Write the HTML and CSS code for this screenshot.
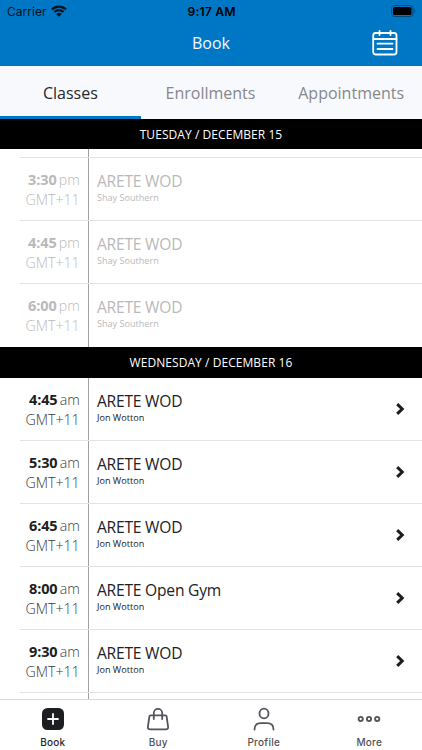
FILE: index.html
```html
<!DOCTYPE html>
<html lang="en">
<head>
<meta charset="utf-8">
<title>Book</title>
<link rel="stylesheet" href="styles.css">
</head>
<body>
<div class="app">
  <header class="top">
    <div class="status">
      <div class="carrier"><span>Carrier</span>
        <svg class="wifi" width="16" height="12" viewBox="0 0 16 12" fill="none" stroke="#07131d" stroke-width="2.2"><path d="M1 4.4a10 10 0 0 1 14 0M3.5 7a6.4 6.4 0 0 1 9 0"/><path d="M5.3 9a3.8 3.8 0 0 1 5.4 0L8 11.7z" fill="#07131d" stroke="none"/></svg>
      </div>
      <div class="clock">9:17 AM</div>
      <svg class="battery" width="25" height="12" viewBox="0 0 25 12"><rect x=".5" y=".5" width="21.5" height="11" rx="3" fill="none" stroke="#034a7c"/><rect x="2" y="2" width="18.5" height="8" rx="1.6" fill="#000"/><path d="M23.3 4v4c1.5-.6 1.5-3.400 0-4z" fill="#034a7c"/></svg>
    </div>
    <div class="titlebar">
      <h1>Book</h1>
      <svg class="calendar" width="26" height="26" viewBox="0 0 26 26" fill="none" stroke="#fff" stroke-width="1.8" stroke-linecap="round"><rect x="1.200" y="3" width="23.300" height="21.500" rx="2.500"/><path d="M1.500 9h23M7.500 1v4M18.500 1v4M5.500 13.700h15M5.500 19h15"/></svg>
    </div>
  </header>
  <nav class="tabs"><div class="tab active"><span>Classes</span></div><div class="tab"><span>Enrollments</span></div><div class="tab"><span>Appointments</span></div></nav>
  <h2 class="day first">TUESDAY / DECEMBER 15</h2>
  <section class="list past">
    <div class="row sliver-top"></div>
    <div class="row"><div class="time"><p><b>3:30</b> pm</p><p>GMT+11</p></div><div class="info"><h3>ARETE WOD</h3><p>Shay Southern</p></div></div>
    <div class="row"><div class="time"><p><b>4:45</b> pm</p><p>GMT+11</p></div><div class="info"><h3>ARETE WOD</h3><p>Shay Southern</p></div></div>
    <div class="row"><div class="time"><p><b>6:00</b> pm</p><p>GMT+11</p></div><div class="info"><h3>ARETE WOD</h3><p>Shay Southern</p></div></div>
  </section>
  <h2 class="day">WEDNESDAY / DECEMBER 16</h2>
  <section class="list upcoming">
    <div class="row"><div class="time"><p><b>4:45</b> am</p><p>GMT+11</p></div><div class="info"><h3>ARETE WOD</h3><p>Jon Wotton</p></div><svg class="chev" width="10" height="14" viewBox="0 0 10 14"><path d="M2.200 2.200 7.200 7 2.200 11.800"/></svg></div>
    <div class="row"><div class="time"><p><b>5:30</b> am</p><p>GMT+11</p></div><div class="info"><h3>ARETE WOD</h3><p>Jon Wotton</p></div><svg class="chev" width="10" height="14" viewBox="0 0 10 14"><path d="M2.200 2.200 7.200 7 2.200 11.800"/></svg></div>
    <div class="row"><div class="time"><p><b>6:45</b> am</p><p>GMT+11</p></div><div class="info"><h3>ARETE WOD</h3><p>Jon Wotton</p></div><svg class="chev" width="10" height="14" viewBox="0 0 10 14"><path d="M2.200 2.200 7.200 7 2.200 11.800"/></svg></div>
    <div class="row"><div class="time"><p><b>8:00</b> am</p><p>GMT+11</p></div><div class="info"><h3>ARETE Open Gym</h3><p>Jon Wotton</p></div><svg class="chev" width="10" height="14" viewBox="0 0 10 14"><path d="M2.200 2.200 7.200 7 2.200 11.800"/></svg></div>
    <div class="row"><div class="time"><p><b>9:30</b> am</p><p>GMT+11</p></div><div class="info"><h3>ARETE WOD</h3><p>Jon Wotton</p></div><svg class="chev" width="10" height="14" viewBox="0 0 10 14"><path d="M2.200 2.200 7.200 7 2.200 11.800"/></svg></div>
  </section>
  <nav class="bottom">
    <div class="item on"><svg width="24" height="24" viewBox="0 0 24 24"><rect x="1" y="1" width="22" height="22" rx="5.500" fill="#1d1e22"/><path d="M12 7v10M7 12h10" stroke="#fff" stroke-width="1.800" stroke-linecap="round"/></svg><span>Book</span></div>
    <div class="item"><svg width="24" height="24" viewBox="0 0 24 24" class="line"><path d="M4.600 8.300h14.800q1 0 1.200 1l1.500 10.500q.3 2.500-2.200 2.500H4.100q-2.500 0-2.200-2.500L3.400 9.300q.2-1 1.200-1z"/><path d="M7.800 12V6a4.200 4.200 0 0 1 8.400 0v6"/></svg><span>Buy</span></div>
    <div class="item"><svg width="24" height="24" viewBox="0 0 24 24" class="line"><ellipse cx="12" cy="6.500" rx="4.500" ry="4.900"/><path d="M2.500 22.500c0-4.200 2.800-6.300 6.500-6.300h6c3.700 0 6.500 2.100 6.500 6.300"/></svg><span>Profile</span></div>
    <div class="item"><svg width="24" height="24" viewBox="0 0 24 24" class="line dots"><circle cx="3.700" cy="12" r="2.100"/><circle cx="12" cy="12" r="2.100"/><circle cx="20.200" cy="12" r="2.100"/></svg><span>More</span></div>
  </nav>
</div>
</body>
</html>
```
FILE: styles.css
```css
* { box-sizing: border-box; margin: 0; padding: 0; }
body { font-family: "Open Sans", sans-serif; background: #fff; overflow: hidden; }
.app { width: 422px; height: 750px; display: flex; flex-direction: column; overflow: hidden; }
svg { display: block; flex: none; }
.top { height: 65.5px; flex: none; background: #0077c5; }
.status { height: 22px; display: grid; grid-template-columns: 1fr auto 1fr; align-items: center; padding: 0 6px 0 7px; font-family: Inter, sans-serif; color: #07131d; }
.carrier { display: flex; align-items: center; gap: 4px; font-size: 12px; letter-spacing: .05px; }
.wifi { margin-top: -1px; }
.clock { font-size: 12.2px; font-weight: 600; letter-spacing: .15px; color: #000; }
.battery { justify-self: end; margin-top: -1px; }
.titlebar { height: 42px; display: grid; grid-template-columns: 1fr auto 1fr; align-items: center; }
.titlebar h1 { grid-column: 2; font-size: 16px; line-height: 22px; font-weight: 400; color: #f2f9ff; }
.calendar { justify-self: end; margin-right: 24px; margin-top: 0; }
.tabs { height: 53px; flex: none; display: grid; grid-template-columns: repeat(3, 1fr); background: #f8f9fc; }
.tab { display: flex; align-items: center; justify-content: center; font-size: 16px; color: #85888d; border-bottom: 3px solid transparent; padding: 4px 1px 0 0; }
.tab.active { color: #25272b; border-bottom-color: #0077c5; padding-right: 0; }
.day { height: 30.5px; flex: none; background: #000; color: #fff; font-size: 12px; letter-spacing: .06px; font-weight: 400; line-height: 31px; text-align: center; }
.list { flex: none; background: linear-gradient(#a0a0a2, #a0a0a2) 88px 0 / 1px 100% no-repeat; }
.past { height: 198px; }
.row { height: 63px; margin-left: 20px; border-bottom: 1px solid #e3e3e4; display: flex; align-items: flex-start; }
.row.sliver-top { height: 9px; }
.time { width: 59.7px; padding-top: 12px; text-align: right; font-weight: 300; font-size: 14.2px; line-height: 19.5px; color: #37383b; flex: none; word-spacing: -1.6px; }
.time b { font-weight: 700; font-size: 14.5px; color: #1d1e21; letter-spacing: -.1px; }
.info { flex: 1; padding: 12px 0 0 17.3px; color: #202124; }
.info h3 { font-size: 15.6px; letter-spacing: -.22px; font-weight: 400; line-height: 22px; }
.info p { font-size: 9.1px; line-height: 12px; }
.past .time, .past .time b, .past .info { color: #b9b9ba; }
.past .row:last-child { border-bottom: 0; }
.upcoming { height: 321.5px; padding-top: .5px; }
.chev { margin-top: 23.5px; margin-right: 17px; fill: none; stroke: #1b1c1f; stroke-width: 3; }
.bottom { height: 51px; flex: none; display: grid; grid-template-columns: repeat(4, 1fr); border-top: 1px solid #dadadc; background: #fff; }
.item { display: flex; flex-direction: column; align-items: center; padding-top: 7px; font-family: Inter, sans-serif; font-size: 10px; line-height: 12px; font-weight: 500; letter-spacing: .25px; color: #505158; gap: 5px; }
.item.on { color: #25262a; }
.line { fill: none; stroke: #54555c; stroke-width: 1.8; stroke-linecap: round; }
.dots { stroke-width: 1.9; }
```
